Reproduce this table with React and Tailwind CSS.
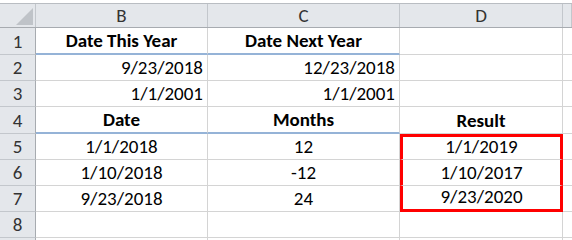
import React from "react";

// sheet rows: [row number, B, C, D]
// each cell: { t: text, bold, align }
const rows = [
  { n: 1, blue: true, cells: [{ t: "Date This Year", bold: true, align: "center" }, { t: "Date Next Year", bold: true, align: "center" }, null] },
  { n: 2, cells: [{ t: "9/23/2018", align: "right" }, { t: "12/23/2018", align: "right" }, null] },
  { n: 3, cells: [{ t: "1/1/2001", align: "right" }, { t: "1/1/2001", align: "right" }, null] },
  { n: 4, blue: true, cells: [{ t: "Date", bold: true, align: "center" }, { t: "Months", bold: true, align: "center" }, { t: "Result", bold: true, align: "center" }] },
  { n: 5, cells: [{ t: "1/1/2018", align: "center" }, { t: "12", align: "center" }, { t: "1/1/2019", align: "center" }], box: "top" },
  { n: 6, cells: [{ t: "1/10/2018", align: "center" }, { t: "-12", align: "center" }, { t: "1/10/2017", align: "center" }], box: "mid" },
  { n: 7, cells: [{ t: "9/23/2018", align: "center" }, { t: "24", align: "center" }, { t: "9/23/2020", align: "center" }], box: "bottom" },
  { n: 8, cells: [null, null, null] },
  { n: 9, cells: [null, null, null], hidden: true },
];

const heights = {
  1: "h-[27px]",
  2: "h-[26px]",
  3: "h-[26px]",
  4: "h-[27px]",
  5: "h-[26px]",
  6: "h-[26px]",
  7: "h-[26px]",
  8: "h-[26px]",
  9: "h-[26px]",
};

function borderFor(col, blue, box) {
  // the result block is framed in red
  if (col === 2 && box === "top")
    return "border-t-[3px] border-l-[3px] border-r-[3px] border-b border-t-[#ff0000] border-l-[#ff0000] border-r-[#ff0000] border-b-[#d4d4d4]";
  if (col === 2 && box === "mid")
    return "border-l-[3px] border-r-[3px] border-b border-l-[#ff0000] border-r-[#ff0000] border-b-[#d4d4d4]";
  if (col === 2 && box === "bottom")
    return "border-l-[3px] border-r-[3px] border-b-[3px] border-[#ff0000]";
  if (blue && col < 2) return "border-r border-b-2 border-r-[#d4d4d4] border-b-[#95b3d7]";
  return "border-r border-b border-[#d4d4d4]";
}

function Cell({ cell, blue, box, col }) {
  const justify =
    cell?.align === "right" ? "justify-end pr-[4px]" : "justify-center";

  return (
    <div className={`${borderFor(col, blue, box)} flex items-end pb-[3px] ${justify}`}>
      {cell && (
        <span className={`leading-none whitespace-nowrap ${cell.bold ? "font-bold" : ""}`}>
          {cell.t}
        </span>
      )}
    </div>
  );
}

export default function App() {
  return (
    <div
      className="w-[572px] h-[240px] overflow-hidden bg-white text-black text-[19px]"
      style={{ fontFamily: "Carlito, Calibri, Lato, 'Liberation Sans', sans-serif" }}
    >
      <div className="h-[4px] bg-white border-b border-b-[#b9bdc2]" />

      {/* column headers */}
      <div className="grid grid-cols-[36px_172px_192px_163px_1fr] h-[24px] bg-[#e4e7eb] text-[#333333] border-b border-b-[#a7abb0]">
        <div className="relative border-r border-r-[#c3c7cc]">
          <svg className="absolute left-[16px] top-[4px]" width="17" height="17" viewBox="0 0 17 17">
            <polygon points="17,0 17,17 0,17" fill="#bfc3c8" />
          </svg>
        </div>
        {["B", "C", "D", ""].map((l, i) => (
          <div key={i} className="flex items-center justify-center border-r border-r-[#c3c7cc] leading-none">
            {l}
          </div>
        ))}
      </div>

      {rows.map((r) => (
        <div key={r.n} className={`grid grid-cols-[36px_172px_192px_163px_1fr] ${heights[r.n]}`}>
          <div className="bg-[#e4e7eb] text-[#333333] border-r border-r-[#a7abb0] border-b border-b-[#c3c7cc] flex items-end justify-center pb-[3px] leading-none">
            {r.hidden ? "" : r.n}
          </div>
          {r.cells.map((c, i) => (
            <Cell key={i} cell={c} blue={r.blue} box={r.box} col={i} />
          ))}
          <div className="border-b border-b-[#d4d4d4]" />
        </div>
      ))}
    </div>
  );
}
